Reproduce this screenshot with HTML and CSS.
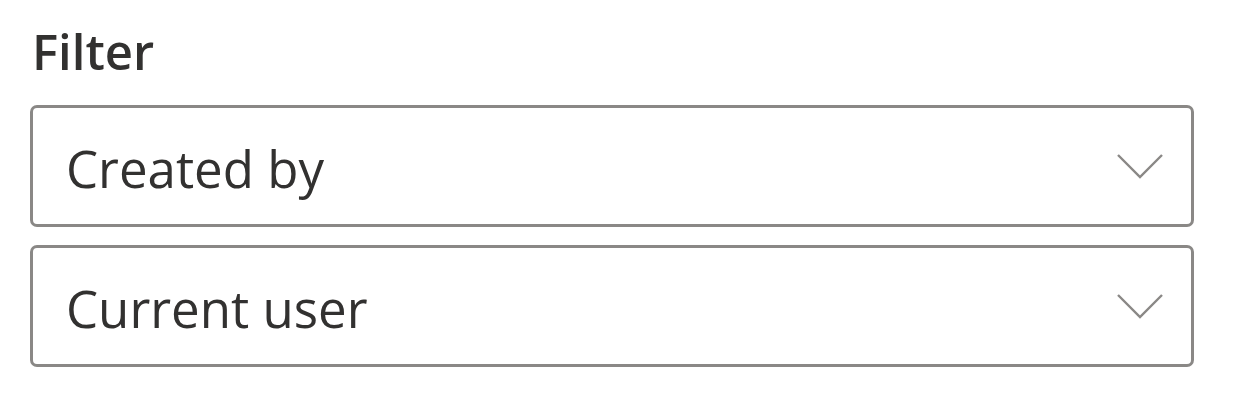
FILE: index.html
```html
<!DOCTYPE html>
<html lang="en">
<head>
<meta charset="utf-8">
<link rel="stylesheet" href="styles.css">
<title>Filter</title>
</head>
<body>
<div class="panel">
  <div class="label">Filter</div>
  <div class="field">
    <span class="value">Created by</span>
    <svg class="chevron" viewBox="0 0 48 26" width="48" height="26"><path d="M2 2 L24 24 L46 2" fill="none" stroke="#8a8886" stroke-width="2.4"/></svg>
  </div>
  <div class="field">
    <span class="value">Current user</span>
    <svg class="chevron" viewBox="0 0 48 26" width="48" height="26"><path d="M2 2 L24 24 L46 2" fill="none" stroke="#8a8886" stroke-width="2.4"/></svg>
  </div>
</div>
</body>
</html>
```

FILE: styles.css
```css
html, body {
  margin: 0;
  padding: 0;
  background: #ffffff;
}
body {
  font-family: "Open Sans", "Noto Sans", sans-serif;
  color: #323130;
}
.panel {
  display: flex;
  flex-direction: column;
  padding: 22px 40px 0 30px;
  gap: 18px;
}
.label {
  font-weight: 600;
  font-size: 49px;
  line-height: 58px;
  padding-left: 2px;
  margin-bottom: 7px;
}
.field {
  box-sizing: border-box;
  height: 122px;
  width: 1164px;
  border: 3px solid #8a8886;
  border-radius: 7px;
  display: flex;
  align-items: center;
  justify-content: space-between;
  padding: 4px 27px 0 33px;
}
.value {
  font-size: 51px;
  line-height: 60px;
}
.chevron {
  display: block;
  margin-top: -4px;
}
```
